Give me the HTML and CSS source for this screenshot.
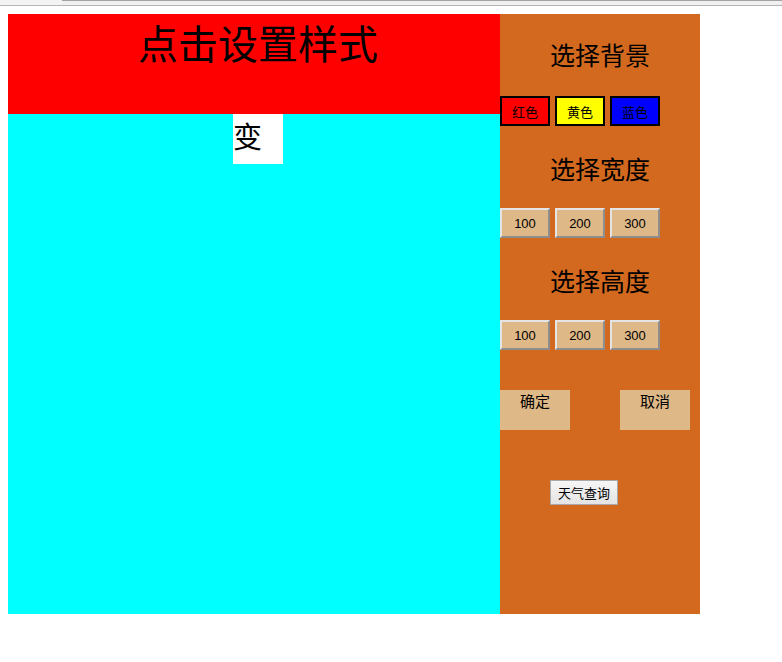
FILE: index.html
```html
<!DOCTYPE html>
<html>
<head>
<meta charset="utf-8">
<link rel="stylesheet" href="styles.css">
</head>
<body>
<div class="chrome"><div class="chrome-tab"></div><div class="chrome-bar"></div></div>
<div class="page">
  <div class="layout">
    <div class="main">
      <div class="header"><h1 class="title">点击设置样式</h1></div>
      <div class="content"><div class="box">变</div></div>
    </div>
    <div class="panel">
      <h2 class="heading first">选择背景</h2>
      <div class="row">
        <button class="btn color red">红色</button>
        <button class="btn color yellow">黄色</button>
        <button class="btn color blue">蓝色</button>
      </div>
      <h2 class="heading">选择宽度</h2>
      <div class="row">
        <button class="btn size">100</button>
        <button class="btn size">200</button>
        <button class="btn size">300</button>
      </div>
      <h2 class="heading">选择高度</h2>
      <div class="row">
        <button class="btn size">100</button>
        <button class="btn size">200</button>
        <button class="btn size">300</button>
      </div>
      <div class="actions">
        <div class="action">确定</div>
        <div class="action">取消</div>
      </div>
      <div class="weather-row"><button class="weather">天气查询</button></div>
    </div>
  </div>
</div>
</body>
</html>
```
FILE: styles.css
```css
html, body {
  margin: 0;
  padding: 0;
  background: #fff;
  font-family: "Noto Sans CJK SC", "Liberation Sans", sans-serif;
}
.chrome {
  display: flex;
  height: 5px;
  border-bottom: 1px solid #b4b4b4;
  background: #f0f0f0;
}
.chrome-tab {
  width: 62px;
  background: #f3f3f3;
}
.chrome-bar {
  flex: 1;
  border-top: 1px solid #a2a2a2;
  background: #f0f0f0;
}
.page {
  padding: 8px;
}
.layout {
  display: flex;
  width: 700px;
  height: 600px;
}
.main {
  width: 500px;
  flex: none;
  display: flex;
  flex-direction: column;
}
.header {
  height: 100px;
  background: #ff0000;
  box-sizing: border-box;
  padding-top: 8px;
}
.title {
  margin: 0;
  font-size: 40px;
  line-height: 40px;
  font-weight: normal;
  text-align: center;
  color: #000;
}
.content {
  flex: 1;
  background: #00ffff;
  display: flex;
  justify-content: center;
}
.box {
  width: 50px;
  height: 50px;
  background: #fff;
  font-size: 29px;
  line-height: 42px;
  color: #000;
}
.panel {
  position: relative;
  z-index: 1;
  width: 200px;
  flex: none;
  margin-left: -8px;
  background: #d2691e;
  box-sizing: border-box;
  padding-top: 28px;
  display: flex;
  flex-direction: column;
}
.heading {
  margin: 30px 0 28px;
  font-size: 25px;
  line-height: 24px;
  font-weight: normal;
  text-align: center;
  color: #000;
}
.heading.first {
  margin-top: 0;
  margin-bottom: 30px;
}
.row {
  display: flex;
  gap: 5px;
  height: 30px;
}
.btn {
  width: 50px;
  height: 30px;
  margin: 0;
  padding: 0;
  box-sizing: border-box;
  font-family: "Liberation Sans", "Noto Sans CJK SC", sans-serif;
  font-size: 13px;
  color: #000;
}
.color {
  border: 2px solid #000;
}
.red { background: #ff0000; }
.yellow { background: #ffff00; }
.blue { background: #0000ff; }
.size {
  background: #deb887;
  border: 2px solid;
  border-color: #e4e4e4 #8e8e8e #8e8e8e #e4e4e4;
}
.actions {
  display: flex;
  gap: 50px;
  margin-top: 40px;
}
.action {
  width: 70px;
  height: 40px;
  background: #deb887;
  text-align: center;
  font-size: 15px;
  line-height: 22px;
  color: #000;
}
.weather-row {
  margin-top: 49px;
  padding-left: 50px;
}
.weather {
  width: 68px;
  height: 25px;
  margin: 0;
  padding: 0;
  border: 1px solid #a9a9a9;
  background: linear-gradient(#f6f6f6, #e4e4e4);
  font-family: "Noto Sans CJK SC", sans-serif;
  font-size: 13px;
  color: #000;
}
```
